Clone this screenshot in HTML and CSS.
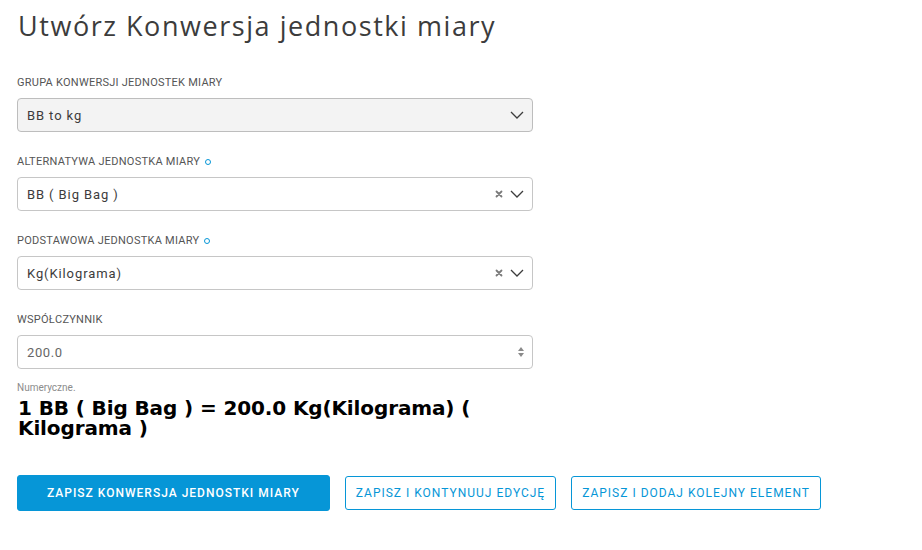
FILE: index.html
```html
<!DOCTYPE html>
<html lang="pl">
<head>
<meta charset="utf-8">
<title>Utwórz Konwersja jednostki miary</title>
<link rel="stylesheet" href="styles.css">
</head>
<body>
<main class="page">
  <h1 class="title">Utwórz Konwersja jednostki miary</h1>
  <form class="form">
    <div class="field">
      <label class="label">Grupa konwersji jednostek miary</label>
      <div class="control control--disabled">
        <span class="value">BB to kg</span>
        <span class="icons">
          <svg class="chevron" width="14" height="8" viewBox="0 0 14 8"><polyline points="1,1 7,7 13,1" fill="none" stroke="#3c3c3c" stroke-width="1.3"/></svg>
        </span>
      </div>
    </div>
    <div class="field">
      <label class="label">Alternatywa jednostka miary <span class="req"></span></label>
      <div class="control">
        <span class="value">BB ( Big Bag )</span>
        <span class="icons">
          <svg class="clear" width="8" height="8" viewBox="0 0 8 8"><path d="M1.5 1.5 L6.5 6.5 M6.5 1.5 L1.5 6.5" stroke="#7a7a7a" stroke-width="1.8" stroke-linecap="round"/></svg>
          <svg class="chevron" width="14" height="8" viewBox="0 0 14 8"><polyline points="1,1 7,7 13,1" fill="none" stroke="#3c3c3c" stroke-width="1.3"/></svg>
        </span>
      </div>
    </div>
    <div class="field">
      <label class="label">Podstawowa jednostka miary <span class="req"></span></label>
      <div class="control">
        <span class="value">Kg(Kilograma)</span>
        <span class="icons">
          <svg class="clear" width="8" height="8" viewBox="0 0 8 8"><path d="M1.5 1.5 L6.5 6.5 M6.5 1.5 L1.5 6.5" stroke="#7a7a7a" stroke-width="1.8" stroke-linecap="round"/></svg>
          <svg class="chevron" width="14" height="8" viewBox="0 0 14 8"><polyline points="1,1 7,7 13,1" fill="none" stroke="#3c3c3c" stroke-width="1.3"/></svg>
        </span>
      </div>
    </div>
    <div class="field field--last">
      <label class="label">Współczynnik</label>
      <div class="control">
        <span class="value value--muted">200.0</span>
        <span class="spinner">
          <svg width="8" height="12" viewBox="0 0 8 12"><path d="M4 1 L7 5 L1 5 Z M1 7 L7 7 L4 11 Z" fill="#8a8a8a"/></svg>
        </span>
      </div>
    </div>
    <p class="help">Numeryczne.</p>
    <p class="result">1 BB ( Big Bag ) = 200.0 Kg(Kilograma) ( Kilograma )</p>
    <div class="actions">
      <button type="button" class="btn btn--primary">Zapisz Konwersja jednostki miary</button>
      <button type="button" class="btn btn--outline">Zapisz i kontynuuj edycję</button>
      <button type="button" class="btn btn--outline">Zapisz i dodaj kolejny element</button>
    </div>
  </form>
</main>
</body>
</html>
```

FILE: styles.css
```css
* { box-sizing: border-box; }

html, body {
  margin: 0;
  padding: 0;
  background: #ffffff;
}

body {
  font-family: Roboto, "Liberation Sans", sans-serif;
  color: #3c3c3c;
}

.page {
  padding: 8px 17px 0 17px;
}

.title {
  margin: 0 0 31px 1px;
  font-family: "Open Sans", "Noto Sans", sans-serif;
  font-weight: 400;
  font-size: 27px;
  line-height: 36px;
  letter-spacing: 1.55px;
  color: #3c3c3c;
}

.form {
  width: 516px;
}

.field {
  margin-bottom: 22px;
}

.field--last {
  margin-bottom: 0;
}

.label {
  display: flex;
  align-items: center;
  gap: 5px;
  height: 16px;
  margin-bottom: 7px;
  font-size: 11px;
  line-height: 16px;
  letter-spacing: 0.25px;
  text-transform: uppercase;
  color: #555555;
}

.req {
  display: inline-block;
  width: 6px;
  height: 6px;
  border: 1.6px solid #0696d7;
  border-radius: 50%;
}

.control {
  display: flex;
  align-items: center;
  justify-content: space-between;
  height: 34px;
  padding: 0 8px 0 9px;
  border: 1px solid #c6c6c6;
  border-radius: 4px;
  background: #ffffff;
}

.control--disabled {
  background: #f3f3f3;
  border-color: #bdbdbd;
}

.value {
  font-size: 13px;
  line-height: 15px;
  letter-spacing: 0.9px;
  color: #3c3c3c;
}

.value--muted {
  color: #666666;
  letter-spacing: 0.6px;
}

.icons {
  display: flex;
  align-items: center;
  gap: 7px;
}

.clear {
  display: block;
}

.chevron {
  display: block;
}

.spinner {
  display: flex;
  align-items: center;
  margin-right: -1px;
}

.spinner svg {
  display: block;
}

.help {
  margin: 13px 0 0 0;
  font-size: 10px;
  line-height: 12px;
  color: #8c8c8c;
}

.result {
  margin: 4px 0 0 1px;
  font-family: "DejaVu Sans", "Open Sans", sans-serif;
  font-weight: 700;
  font-size: 20px;
  line-height: 20px;
  letter-spacing: -0.12px;
  color: #000000;
  width: 500px;
}

.actions {
  display: flex;
  align-items: center;
  gap: 15px;
  margin-top: 37px;
  width: 900px;
}

.btn {
  font-family: Roboto, "Liberation Sans", sans-serif;
  font-size: 12px;
  text-transform: uppercase;
  letter-spacing: 1px;
  border-radius: 3px;
  cursor: pointer;
}

.btn--primary {
  height: 36px;
  padding: 0 29px;
  font-weight: 500;
  color: #ffffff;
  background: #0696d7;
  border: 1px solid #0696d7;
}

.btn--outline {
  height: 34px;
  padding: 0 10px;
  font-weight: 400;
  color: #0696d7;
  background: #ffffff;
  border: 1px solid #0696d7;
}
```
